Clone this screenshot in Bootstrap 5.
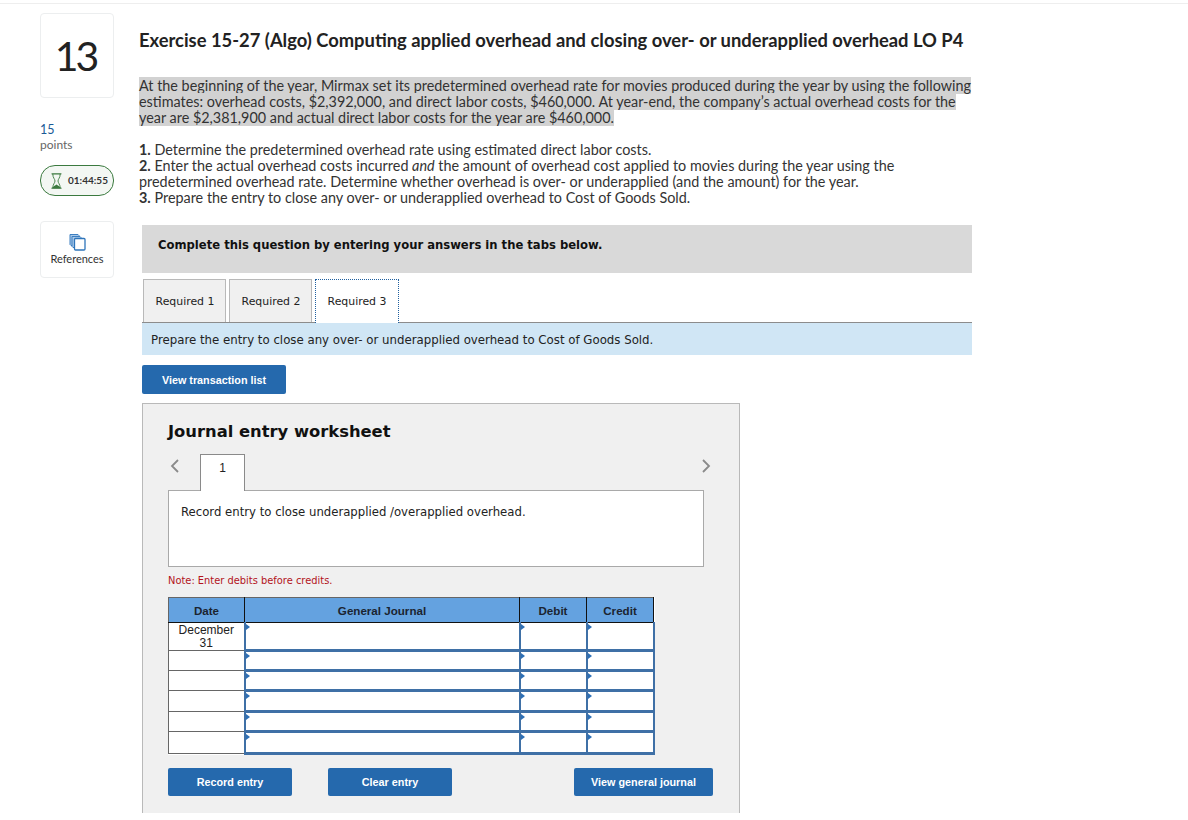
<!DOCTYPE html>
<html lang="en">
<head>
<meta charset="utf-8">
<title>Exercise 15-27</title>
<link href="https://cdn.jsdelivr.net/npm/bootstrap@5.3.0/dist/css/bootstrap.min.css" rel="stylesheet">
<style>
html,body{height:820px;overflow:hidden;background:#fff;}
body{font-family:"Lato","Liberation Sans",sans-serif;color:#333;}
.sheet{height:810px;overflow:hidden;border-top:1px solid #eee;margin-top:3px;padding:9px 0 0 40px;gap:25px;}
.side{width:74px;flex:none;}
.numbox{height:85px;border:1px solid #eceeef;border-radius:4px;font-size:41px;letter-spacing:-3px;padding-right:3px;color:#222;}
.pts{margin-top:24px;font-size:12.5px;line-height:16px;color:#1a5a96;}
.ptl{font-size:12px;line-height:16px;color:#666;margin-top:-1px;}
.timer{margin-top:12px;height:31px;border:1px solid #3b7a3f;border-radius:15px;background:#f3f7f3;font-size:10px;font-weight:700;color:#333;gap:6px;padding-left:10px;}
.refs{margin-top:25px;height:57px;border:1px solid #eceeef;border-radius:4px;font-size:11px;line-height:13px;color:#333;padding-top:11px;}
.reflabel{margin-top:1px;}
.main{width:833px;flex:none;}
.extitle{margin:17px 0 0;font-size:18.36px;line-height:20px;font-weight:700;color:#222;}
.intro{margin:28px 0 0;font-size:14.38px;line-height:16px;color:#333;}
.intro span{background:#d2d2d2;-webkit-box-decoration-break:clone;box-decoration-break:clone;}
.steps{margin:16px 0 0;font-size:14.38px;line-height:16px;color:#333;}
.inner{margin:19px 0 0 3px;font-family:"DejaVu Sans","Liberation Sans",sans-serif;}
.cta{height:48px;background:#d9d9d9;padding:0 0 7px 16px;font-size:11.6px;font-weight:700;color:#111;}
.jtabs{margin-top:6px;height:44px;border-bottom:1px solid #8c8c8c;padding-left:1px;gap:3px;align-items:flex-end;}
.jtab{height:43px;width:83px;border:1px solid #b9b9b9;border-bottom:0;background:#f0f0f0;font-size:10.9px;color:#222;padding:2px 0 0 1px;}
.jtab.on{background:#fff;width:84px;height:44px;padding-left:0;border:1px dotted #1f5f9f;border-bottom:0;margin-bottom:-1px;}
.info{height:32px;background:#d0e6f5;padding:4px 0 0 9px;font-size:11.78px;color:#222;}
.blue{background:#2569ad;border:0;border-radius:2px;color:#fff;font-family:"Liberation Sans",sans-serif;font-weight:700;font-size:10.8px;padding:0;}
.blue:hover{background:#2569ad;color:#fff;}
.b-view{width:144px;height:29px;margin-top:10px;display:block;padding-top:1px;}
.panel{margin-top:9px;width:598px;height:420px;background:#f0f0f0;border:1px solid #b9b9b9;padding:0 25px;}
.ptitle{margin:17px 0 0;font-size:16.35px;line-height:22px;font-weight:700;color:#111;}
.pager{margin-top:11px;height:37px;position:relative;z-index:1;}
.ptab{width:45px;height:37px;margin-left:32px;background:#fff;border:1px solid #8a8a8a;border-bottom:0;font-family:"Liberation Sans",sans-serif;font-size:12px;color:#222;padding-top:4px;text-align:center;}
.chev{width:10px;height:14px;}
.chevl{position:absolute;left:2px;top:5px;}
.chevr{position:absolute;left:533px;top:5px;}
.task{width:536px;height:77px;margin-top:-1px;background:#fff;border:1px solid #a9a9a9;padding:13px 12px;font-size:11.7px;line-height:16px;color:#222;}
.note{margin:8px 0 0;font-size:9.9px;line-height:12px;color:#b3131b;}
.jt{margin-top:10px;width:485px;table-layout:fixed;border-collapse:collapse;font-family:"Liberation Sans",sans-serif;font-size:12px;line-height:13px;color:#222;background:#fff;}
.jt th{background:#64a2e0;height:25px;border:1px solid #111;border-top-color:#666;border-left-color:#666;text-align:center;font-weight:700;color:#1b2430;padding:1px 0 0;font-size:11.6px;}
.jt td{padding:0;position:relative;text-align:center;vertical-align:top;}
.jt td.dt{border:1px solid #666;padding-top:1px;}
.jt td.en{border:solid #3f70a6;border-width:3px 2px;}
.jt tbody tr:first-child td.en{border-top:1px solid #111;}
.jt td.en::before{content:"";position:absolute;left:0;top:1px;border-left:4px solid #2d6fb5;border-top:3px solid transparent;border-bottom:3px solid transparent;}
.actions{margin-top:13px;width:545px;gap:36px;}
.b-act{height:28px;width:124px;}
.b-wide{width:139px;margin-left:auto;}
</style>
</head>
<body>
<div class="sheet d-flex">
  <aside class="side">
    <div class="numbox d-flex align-items-center justify-content-center">13</div>
    <div class="pts">15</div>
    <div class="ptl">points</div>
    <div class="timer d-flex align-items-center">
      <svg width="11" height="16" viewBox="0 0 11 16" aria-hidden="true"><path d="M1 .8h9M1 15.200h9" fill="none" stroke="#3b7a3f" stroke-width="1.200" stroke-linecap="round"/><path d="M1.800 1c0 4 2.200 5 2.200 7s-2.200 3-2.200 7M9.200 1c0 4-2.200 5-2.200 7s2.200 3 2.200 7" fill="none" stroke="#3b7a3f" stroke-width=".9"/><path d="M1.500 15.200c.4-2 2.800-2.500 4-3.700 1.200 1.200 3.600 1.700 4 3.700z" fill="#3b7a3f"/></svg>
      <span>01:44:55</span>
    </div>
    <div class="refs d-flex flex-column align-items-center">
      <svg width="17" height="18" viewBox="0 0 17 18" aria-hidden="true"><path d="M1 1.500h8l1 1v10H2l-1-1z" fill="#a9c8e8" stroke="#3d7fc1"/><path d="M3 3.500h8l1 1v10H4l-1-1z" fill="#a9c8e8" stroke="#3d7fc1"/><rect x="5.500" y="5.500" width="10.500" height="11.500" rx="1" fill="#fff" stroke="#2f75ba" stroke-width="1.300"/></svg>
      <span class="reflabel">References</span>
    </div>
  </aside>
  <main class="main">
    <h1 class="extitle">Exercise 15-27 (Algo) Computing applied overhead and closing over- or underapplied overhead LO P4</h1>
    <p class="intro"><span>At the beginning of the year, Mirmax set its predetermined overhead rate for movies produced during the year by using the following estimates: overhead costs, $2,392,000, and direct labor costs, $460,000. At year-end, the company’s actual overhead costs for the year are $2,381,900 and actual direct labor costs for the year are $460,000.</span></p>
    <div class="steps">
      <div><b>1.</b> Determine the predetermined overhead rate using estimated direct labor costs.</div>
      <div><b>2.</b> Enter the actual overhead costs incurred <i>and</i> the amount of overhead cost applied to movies during the year using the predetermined overhead rate. Determine whether overhead is over- or underapplied (and the amount) for the year.</div>
      <div><b>3.</b> Prepare the entry to close any over- or underapplied overhead to Cost of Goods Sold.</div>
    </div>
    <div class="inner">
      <div class="cta d-flex align-items-center">Complete this question by entering your answers in the tabs below.</div>
      <div class="jtabs d-flex">
        <div class="jtab d-flex align-items-center justify-content-center">Required 1</div>
        <div class="jtab d-flex align-items-center justify-content-center">Required 2</div>
        <div class="jtab on d-flex align-items-center justify-content-center">Required 3</div>
      </div>
      <div class="info d-flex align-items-center">Prepare the entry to close any over- or underapplied overhead to Cost of Goods Sold.</div>
      <button type="button" class="btn blue b-view">View transaction list</button>
      <section class="panel">
        <h2 class="ptitle">Journal entry worksheet</h2>
        <div class="pager">
          <svg class="chev chevl" viewBox="0 0 10 14" aria-hidden="true"><path d="M8 1 2 7l6 6" fill="none" stroke="#8a8a8a" stroke-width="1.800"/></svg>
          <div class="ptab">1</div>
          <svg class="chev chevr" viewBox="0 0 10 14" aria-hidden="true"><path d="M2 1l6 6-6 6" fill="none" stroke="#8a8a8a" stroke-width="1.800"/></svg>
        </div>
        <div class="task">Record entry to close underapplied /overapplied overhead.</div>
        <p class="note">Note: Enter debits before credits.</p>
        <table class="jt">
          <colgroup><col style="width:76px"><col style="width:275px"><col style="width:67px"><col style="width:67px"></colgroup>
          <thead><tr><th>Date</th><th>General Journal</th><th>Debit</th><th>Credit</th></tr></thead>
          <tbody>
            <tr style="height:26px"><td class="dt">December<br>31</td><td class="en"></td><td class="en"></td><td class="en"></td></tr>
            <tr style="height:20px"><td class="dt"></td><td class="en"></td><td class="en"></td><td class="en"></td></tr>
            <tr style="height:20px"><td class="dt"></td><td class="en"></td><td class="en"></td><td class="en"></td></tr>
            <tr style="height:21px"><td class="dt"></td><td class="en"></td><td class="en"></td><td class="en"></td></tr>
            <tr style="height:20px"><td class="dt"></td><td class="en"></td><td class="en"></td><td class="en"></td></tr>
            <tr style="height:22px"><td class="dt"></td><td class="en"></td><td class="en"></td><td class="en"></td></tr>
          </tbody>
        </table>
        <div class="actions d-flex">
          <button type="button" class="btn blue b-act">Record entry</button>
          <button type="button" class="btn blue b-act">Clear entry</button>
          <button type="button" class="btn blue b-act b-wide">View general journal</button>
        </div>
      </section>
    </div>
  </main>
</div>
</body>
</html>
